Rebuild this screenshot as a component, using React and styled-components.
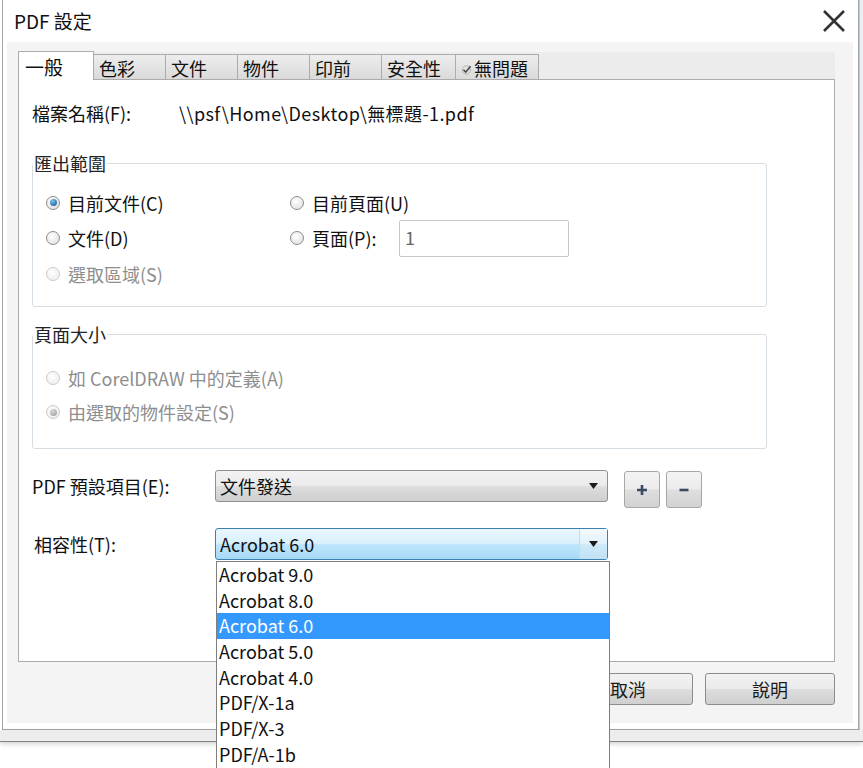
import React from "react";
import styled, { createGlobalStyle, css } from "styled-components";

const GlobalStyle = createGlobalStyle`
  html, body { margin: 0; padding: 0; background: #fff; }
  body {
    font-family: "Noto Sans CJK TC", "Noto Sans", sans-serif;
    color: #111;
  }
  * { box-sizing: border-box; }
`;

const Screen = styled.div`
  position: relative;
  width: 863px;
  height: 768px;
  overflow: hidden;
  background: #fff;
  display: flex;
  flex-direction: column;
`;

const TopRow = styled.div`
  display: flex;
`;

const SideStrip = styled.div`
  flex: 1;
  background: linear-gradient(#e9eef3, #f3f3f3);
  border-left: 1px solid #c9c9c9;
`;

const BottomBand = styled.div`
  height: 12px;
  background: #ededed;
  border-bottom: 1px solid #808080;
  box-shadow: 0 2px 5px rgba(0, 0, 0, 0.18);
`;

const Window = styled.div`
  margin-left: 2px;
  width: 857px;
  height: 730px;
  border: 1px solid #a5a5a5;
  border-top: none;
  background: #fff;
  display: flex;
  flex-direction: column;
`;

const TitleBar = styled.div`
  height: 42px;
  display: flex;
  align-items: center;
  justify-content: space-between;
  padding: 0 12px 0 11px;
`;

const Title = styled.div`
  font-size: 19px;
  line-height: 20px;
  color: #111;
`;

const CloseButton = styled.button`
  border: none;
  background: none;
  padding: 0;
  width: 24px;
  height: 24px;
  display: flex;
  align-items: center;
  justify-content: center;
`;

const Body = styled.div`
  margin: 0 5px 6px 4px;
  height: 681px;
  background: #f4f4f4;
  padding: 10px 18px 18px 11px;
  display: flex;
  flex-direction: column;
`;

const TabStrip = styled.div`
  height: 27px;
  background: #ececec;
  display: flex;
  align-items: flex-end;
`;

const Tab = styled.div`
  width: ${(p) => p.$w}px;
  height: 25px;
  border: 1px solid #acacac;
  border-bottom: none;
  margin-right: -1px;
  background: linear-gradient(#ededed, #dadada);
  font-size: 18px;
  line-height: 20px;
  padding: 3px 0 0 5px;
  display: flex;
  align-items: flex-start;
  gap: 2px;
  color: #111;
  ${(p) =>
    p.$active &&
    css`
      height: 29px;
      margin-bottom: -1px;
      background: #fff;
      position: relative;
      z-index: 1;
      font-size: 19px;
      line-height: 22px;
      padding: 4px 0 0 6px;
    `}
`;

const TabPanel = styled.div`
  height: 583px;
  background: #fff;
  border: 1px solid #acacac;
  padding: 0 13px;
  display: flex;
  flex-direction: column;
`;

const FileRow = styled.div`
  margin-top: 19px;
  height: 28px;
  display: flex;
  align-items: center;
  font-size: 18px;
`;

const FileLabel = styled.span`
  width: 147px;
`;

const FilePath = styled.span`
  letter-spacing: 0.4px;
`;

const Group = styled.fieldset`
  margin: ${(p) => p.$top}px 0 0 0;
  width: 735px;
  border: 1px solid #d6dde3;
  border-radius: 3px;
  padding: ${(p) => p.$pad};
  min-width: 0;
`;

const Legend = styled.legend`
  padding: 0 1px;
  margin-left: 0;
  font-size: 18px;
  line-height: 20px;
  color: #222;
`;

const RadioGrid = styled.div`
  display: grid;
  padding-left: 13px;
  grid-template-columns: 244px 1fr;
  grid-template-rows: ${(p) => p.$rows};
  align-items: center;
`;

const RadioRow = styled.label`
  display: flex;
  align-items: center;
  font-size: 18px;
  line-height: 22px;
  color: ${(p) => (p.$disabled ? "#8e8e8e" : "#111")};
  grid-column: ${(p) => p.$col || "auto"};
`;

const Circle = styled.span`
  width: 14px;
  height: 14px;
  border-radius: 50%;
  margin-right: 8px;
  border: 1px solid ${(p) => (p.$disabled ? "#c9c9c9" : "#8c8c8c")};
  background: ${(p) =>
    p.$disabled
      ? "radial-gradient(circle at 40% 35%, #fdfdfd, #ececec)"
      : "radial-gradient(circle at 40% 35%, #ffffff, #dcdcdc)"};
  display: flex;
  align-items: center;
  justify-content: center;
  flex-shrink: 0;
`;

const Dot = styled.span`
  width: 7px;
  height: 7px;
  border-radius: 50%;
  background: ${(p) =>
    p.$disabled
      ? "radial-gradient(circle at 35% 30%, #d8d8d8, #9a9a9a)"
      : "radial-gradient(circle at 35% 30%, #7cc2f2, #0c4f8c)"};
`;

const RadioText = styled.span`
  width: ${(p) => (p.$w ? `${p.$w}px` : "auto")};
`;

const PageInput = styled.div`
  width: 170px;
  height: 37px;
  border: 1px solid #c6c6c6;
  border-radius: 2px;
  padding: 5px 0 0 5px;
  font-size: 18px;
  line-height: 22px;
  color: #666;
  background: #fff;
`;

const FormRow = styled.div`
  margin-top: ${(p) => p.$top}px;
  display: flex;
  align-items: flex-start;
`;

const FormLabel = styled.div`
  width: 183px;
  height: 32px;
  display: flex;
  align-items: center;
  font-size: 18px;
  padding-left: ${(p) => p.$indent || 0}px;
`;

const Combo = styled.div`
  width: 393px;
  height: 32px;
  border: 1px solid ${(p) => (p.$focused ? "#3c7fb1" : "#8e8f8f")};
  border-radius: 3px;
  display: flex;
  align-items: center;
  font-size: 18px;
  padding-left: 4px;
  background: ${(p) =>
    p.$focused
      ? "linear-gradient(#eaf6fd 0%, #d9f0fc 48%, #bee6fd 52%, #a7d9f5 100%)"
      : "linear-gradient(#f2f2f2 0%, #ebebeb 48%, #dddddd 52%, #cfcfcf 100%)"};
`;

const ComboText = styled.span`
  flex: 1;
`;

const ComboArrow = styled.span`
  width: 28px;
  align-self: stretch;
  display: flex;
  align-items: center;
  justify-content: center;
  ${(p) =>
    p.$focused &&
    css`
      background: linear-gradient(#f2f9fd, #e3f2fb 48%, #cfeaf9 52%, #c0e2f5);
      border-left: 1px solid #bcdcef;
    `}
`;

const SquareButton = styled.button`
  width: 36px;
  height: 37px;
  margin: 1px 0 0 ${(p) => p.$gap}px;
  border: 1px solid #a7a7a7;
  border-radius: 3px;
  background: linear-gradient(#f3f3f3 0%, #ececec 48%, #dedede 52%, #d2d2d2 100%);
  display: flex;
  align-items: center;
  justify-content: center;
  padding: 0;
`;

const Footer = styled.div`
  margin-top: 11px;
  display: flex;
  justify-content: flex-end;
  gap: 12px;
`;

const DialogButton = styled.button`
  width: 130px;
  height: 32px;
  border: 1px solid #8c8c8c;
  border-radius: 3px;
  background: linear-gradient(#f2f2f2 0%, #ebebeb 48%, #dddddd 52%, #cfcfcf 100%);
  font-family: inherit;
  font-size: 18px;
  color: #1a1a1a;
  padding: 0;
`;

const DropList = styled.div`
  position: absolute;
  left: 216px;
  top: 561px;
  width: 394px;
  height: 220px;
  background: #fff;
  border: 1px solid #7f7f7f;
`;

const DropItem = styled.div`
  height: 25.7px;
  line-height: 25.7px;
  padding-left: 2px;
  font-size: 18px;
  color: ${(p) => (p.$selected ? "#fff" : "#111")};
  background: ${(p) => (p.$selected ? "#3399ff" : "transparent")};
`;

const Arrow = () => (
  <svg width="9" height="6" viewBox="0 0 9 6">
    <path d="M0 0 H9 L4.5 6 Z" fill="#1a1a1a" />
  </svg>
);

const Radio = ({ label, checked, disabled, col, w }) => (
  <RadioRow $disabled={disabled} $col={col}>
    <Circle $disabled={disabled}>{checked && <Dot $disabled={disabled} />}</Circle>
    <RadioText $w={w}>{label}</RadioText>
  </RadioRow>
);

const tabs = [
  { label: "一般", w: 76, active: true },
  { label: "色彩", w: 73 },
  { label: "文件", w: 73 },
  { label: "物件", w: 73 },
  { label: "印前", w: 73 },
  { label: "安全性", w: 75 },
  { label: "無問題", w: 84, check: true },
];

const versions = [
  "Acrobat 9.0",
  "Acrobat 8.0",
  "Acrobat 6.0",
  "Acrobat 5.0",
  "Acrobat 4.0",
  "PDF/X-1a",
  "PDF/X-3",
  "PDF/A-1b",
];

const CheckIcon = () => (
  <svg width="11" height="11" viewBox="0 0 11 11" style={{ marginTop: 6 }}>
    <circle cx="5.5" cy="6" r="4.2" fill="none" stroke="#b5b5b5" strokeWidth="1" />
    <path d="M2.5 5.8 L4.8 8.2 L9.5 2.2" fill="none" stroke="#444" strokeWidth="1.5" />
  </svg>
);

export default function App() {
  return (
    <>
      <GlobalStyle />
      <Screen>
        <TopRow>
          <Window>
            <TitleBar>
              <Title>PDF 設定</Title>
              <CloseButton>
                <svg width="22" height="22" viewBox="0 0 22 22">
                  <path d="M1 1 L21 21 M21 1 L1 21" stroke="#333" strokeWidth="2.6" />
                </svg>
              </CloseButton>
            </TitleBar>
            <Body>
              <TabStrip>
                {tabs.map((t) => (
                  <Tab key={t.label} $w={t.w} $active={t.active}>
                    {t.check && <CheckIcon />}
                    {t.label}
                  </Tab>
                ))}
              </TabStrip>
              <TabPanel>
                <FileRow>
                  <FileLabel>檔案名稱(F):</FileLabel>
                  <FilePath>\\psf\Home\Desktop\無標題-1.pdf</FilePath>
                </FileRow>

                <Group $top={26} $pad="12px 0 15px 0">
                  <Legend>匯出範圍</Legend>
                  <RadioGrid $rows="35px 36px 35px">
                    <Radio label="目前文件(C)" checked />
                    <Radio label="目前頁面(U)" />
                    <Radio label="文件(D)" />
                    <RadioRow>
                      <Circle />
                      <RadioText $w={87}>頁面(P):</RadioText>
                      <PageInput>1</PageInput>
                    </RadioRow>
                    <Radio label="選取區域(S)" disabled />
                  </RadioGrid>
                </Group>

                <Group $top={17} $pad="17px 0 19px 0">
                  <Legend>頁面大小</Legend>
                  <RadioGrid $rows="34px 34px">
                    <Radio label="如 CorelDRAW 中的定義(A)" disabled col="1 / 3" />
                    <Radio label="由選取的物件設定(S)" disabled checked col="1 / 3" />
                  </RadioGrid>
                </Group>

                <FormRow $top={21}>
                  <FormLabel>PDF 預設項目(E):</FormLabel>
                  <Combo>
                    <ComboText>文件發送</ComboText>
                    <ComboArrow>
                      <Arrow />
                    </ComboArrow>
                  </Combo>
                  <SquareButton $gap={16}>
                    <svg width="12" height="12" viewBox="0 0 12 12">
                      <path d="M6 1 V11 M1 6 H11" stroke="#3b4a60" strokeWidth="2.6" />
                    </svg>
                  </SquareButton>
                  <SquareButton $gap={6}>
                    <svg width="12" height="12" viewBox="0 0 12 12">
                      <path d="M1.5 6 H10.5" stroke="#3b4a60" strokeWidth="2.6" />
                    </svg>
                  </SquareButton>
                </FormRow>

                <FormRow $top={20}>
                  <FormLabel $indent={2}>相容性(T):</FormLabel>
                  <Combo $focused>
                    <ComboText>Acrobat 6.0</ComboText>
                    <ComboArrow $focused>
                      <Arrow />
                    </ComboArrow>
                  </Combo>
                </FormRow>
              </TabPanel>
              <Footer>
                <DialogButton>確定</DialogButton>
                <DialogButton>取消</DialogButton>
                <DialogButton>說明</DialogButton>
              </Footer>
            </Body>
          </Window>
          <SideStrip />
        </TopRow>
        <BottomBand />

        <DropList>
          {versions.map((v) => (
            <DropItem key={v} $selected={v === "Acrobat 6.0"}>
              {v}
            </DropItem>
          ))}
        </DropList>
      </Screen>
    </>
  );
}
